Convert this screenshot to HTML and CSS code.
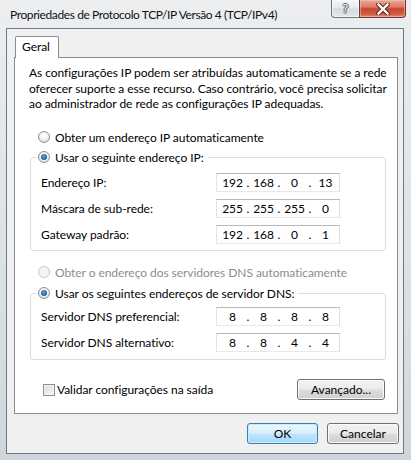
FILE: index.html
```html
<!DOCTYPE html>
<html lang="pt-BR">
<head>
<meta charset="utf-8">
<title>Propriedades de Protocolo TCP/IP Versão 4 (TCP/IPv4)</title>
<link rel="stylesheet" href="styles.css">
</head>
<body>
<div class="window">
  <div class="titlebar">
    <div class="title">Propriedades de Protocolo TCP/IP Versão 4 (TCP/IPv4)</div>
    <div class="caption">
      <div class="cap-btn help"><span class="help-glyph">?</span></div>
      <div class="cap-btn close">
        <svg width="14" height="12" viewBox="0 0 14 12">
          <path d="M2.5 1.5 L11.5 10.5 M11.5 1.5 L2.5 10.5" stroke="#5a2219" stroke-width="4.2" stroke-linecap="square" fill="none"/>
          <path d="M2.5 1.5 L11.5 10.5 M11.5 1.5 L2.5 10.5" stroke="#ffffff" stroke-width="2.4" stroke-linecap="square" fill="none"/>
        </svg>
      </div>
    </div>
  </div>
  <div class="client">
    <div class="tabs"><div class="tab">Geral</div></div>
    <div class="panel">
      <p class="intro">As configurações IP podem ser atribuídas automaticamente se a rede<br>oferecer suporte a esse recurso. Caso contrário, você precisa solicitar<br>ao administrador de rede as configurações IP adequadas.</p>

      <div class="opt opt-first"><span class="radio"></span><span>Obter um endereço IP automaticamente</span></div>

      <fieldset class="group group-ip">
        <legend><span class="radio on"></span><span>Usar o seguinte endereço IP:</span></legend>
        <div class="rows">
          <div class="row"><span>Endereço IP:</span>
            <div class="ip"><span class="seg">192</span><span class="dot">.</span><span class="seg">168</span><span class="dot">.</span><span class="seg">0</span><span class="dot">.</span><span class="seg">13</span></div>
          </div>
          <div class="row"><span>Máscara de sub-rede:</span>
            <div class="ip"><span class="seg">255</span><span class="dot">.</span><span class="seg">255</span><span class="dot">.</span><span class="seg">255</span><span class="dot">.</span><span class="seg">0</span></div>
          </div>
          <div class="row"><span>Gateway padrão:</span>
            <div class="ip"><span class="seg">192</span><span class="dot">.</span><span class="seg">168</span><span class="dot">.</span><span class="seg">0</span><span class="dot">.</span><span class="seg">1</span></div>
          </div>
        </div>
      </fieldset>

      <div class="opt opt-dns disabled"><span class="radio"></span><span>Obter o endereço dos servidores DNS automaticamente</span></div>

      <fieldset class="group group-dns">
        <legend><span class="radio on"></span><span>Usar os seguintes endereços de servidor DNS:</span></legend>
        <div class="rows">
          <div class="row"><span>Servidor DNS preferencial:</span>
            <div class="ip"><span class="seg">8</span><span class="dot">.</span><span class="seg">8</span><span class="dot">.</span><span class="seg">8</span><span class="dot">.</span><span class="seg">8</span></div>
          </div>
          <div class="row"><span>Servidor DNS alternativo:</span>
            <div class="ip"><span class="seg">8</span><span class="dot">.</span><span class="seg">8</span><span class="dot">.</span><span class="seg">4</span><span class="dot">.</span><span class="seg">4</span></div>
          </div>
        </div>
      </fieldset>

      <div class="bottom-row">
        <div class="check"><span class="box"></span><span>Validar configurações na saída</span></div>
        <button class="btn adv">Avançado...</button>
      </div>
    </div>
    <div class="actions">
      <button class="btn ok">OK</button>
      <button class="btn cancel">Cancelar</button>
    </div>
  </div>
</div>
</body>
</html>
```
FILE: styles.css
```css
* { box-sizing: border-box; }
html, body { margin: 0; padding: 0; }
body {
  width: 411px;
  height: 460px;
  overflow: hidden;
  font-family: Lato, "Noto Sans", sans-serif;
  font-size: 12px;
  letter-spacing: -0.05px;
  color: #000;
}
.window {
  width: 411px;
  height: 460px;
  display: flex;
  flex-direction: column;
  background: linear-gradient(180deg, #eceef0 0%, #e2e6ea 35%, #d9dee3 70%, #cfd5da 100%);
}
.titlebar {
  height: 28px;
  flex: none;
  display: flex;
  align-items: flex-start;
}
.title {
  padding: 6px 0 0 10px;
  font-size: 12px;
  letter-spacing: -0.4px;
  line-height: 18px;
  color: #111;
  white-space: nowrap;
}
.caption {
  margin-left: auto;
  margin-right: 5px;
  display: flex;
}
.cap-btn {
  height: 18px;
  display: flex;
  align-items: center;
  justify-content: center;
}
.help {
  width: 28px;
  border: 1px solid #6c747e;
  border-top: none;
  border-right: none;
  border-radius: 0 0 0 4px;
  background: linear-gradient(180deg, #f5f7f9 0%, #e6eaee 48%, #d3d9df 52%, #e3e8ec 100%);
  box-shadow: inset 0 0 0 1px rgba(255,255,255,0.6);
}
.help-glyph {
  font-family: "DejaVu Sans", sans-serif;
  font-size: 12px;
  line-height: 14px;
  color: #eef1f4;
  text-shadow: 1px 0 0 #5d646d, -1px 0 0 #5d646d, 0 1px 0 #5d646d, 0 -1px 0 #5d646d;
}
.close {
  width: 47px;
  border: 1px solid #6b3a32;
  border-top: none;
  border-radius: 0 0 4px 0;
  background: linear-gradient(180deg, #e9a896 0%, #dc7c65 40%, #c8472f 52%, #cf5a40 80%, #e08a70 100%);
  box-shadow: inset 0 0 0 1px rgba(255,210,200,0.45);
}
.close svg { display: block; }

.client {
  margin: 0 7px 0 6px;
  height: 426px;
  flex: none;
  border: 1px solid #6f7a86;
  background: #f0f0f0;
  display: flex;
  flex-direction: column;
}
.tabs {
  display: flex;
  padding: 7px 0 0 8px;
}
.tab {
  width: 44px;
  height: 22px;
  margin-bottom: -1px;
  border: 1px solid #898c95;
  border-bottom: none;
  border-radius: 2px 2px 0 0;
  background: #fff;
  padding: 2px 0 0 6px;
  line-height: 15px;
  position: relative;
  z-index: 1;
}
.panel {
  margin-left: 7px;
  width: 384px;
  height: 357px;
  border: 1px solid #898c95;
  background: #fff;
  display: flex;
  flex-direction: column;
}
.intro {
  margin: 7px 0 0 14px;
  line-height: 15.5px;
  white-space: nowrap;
}
.opt {
  display: flex;
  align-items: center;
  gap: 5px;
  height: 16px;
  margin-left: 23px;
}
.opt-first { margin-top: 17.5px; }
.opt-dns { margin-top: 13px; }
.disabled { color: #8d8d8d; }

.radio {
  width: 12px;
  height: 12px;
  flex: none;
  border-radius: 50%;
  border: 1px solid #8e8f8f;
  background: radial-gradient(circle at 50% 35%, #ffffff 0%, #f2f2f2 45%, #d6d6d6 100%);
  display: flex;
  align-items: center;
  justify-content: center;
}
.radio.on::after {
  content: "";
  width: 6px;
  height: 6px;
  border-radius: 50%;
  background: radial-gradient(circle at 45% 40%, #5fa4dd 0%, #2a6aa8 55%, #0f3f6e 100%);
}
.disabled .radio {
  border-color: #c4c4c4;
  background: #f4f4f4;
}

.group {
  margin: 4px 11px 0 15px;
  border: 1px solid #d5dfe5;
  border-radius: 3px;
  padding: 0 10px 6px 10px;
  min-width: 0;
}
.group-ip { padding-top: 8px; }
.group-dns { margin-top: 5px; padding-top: 6px; padding-bottom: 7px; }
.group legend {
  display: flex;
  align-items: center;
  gap: 5px;
  height: 16px;
  padding: 0 4px 0 1px;
  margin-left: -4px;
}
.rows {
  display: flex;
  flex-direction: column;
  gap: 7px;
}
.row {
  display: grid;
  grid-template-columns: 175px 124px;
  align-items: center;
  height: 19px;
}
.ip {
  height: 19px;
  display: flex;
  align-items: center;
  padding-left: 4px;
  border: 1px solid;
  border-color: #b6b8bd #dbdfe6 #e3e9ef #e2e3ea;
  background: #fff;
}
.seg {
  width: 23px;
  text-align: center;
}
.dot {
  width: 8px;
  text-align: center;
}

.bottom-row {
  display: flex;
  align-items: center;
  height: 21px;
  margin-top: 19px;
  padding-left: 28px;
  padding-right: 12px;
}
.check {
  display: flex;
  align-items: center;
  gap: 2px;
}
.box {
  width: 12px;
  height: 12px;
  border: 1px solid #8e8f8f;
  background: linear-gradient(135deg, #dcdcdc 0%, #f6f6f6 100%);
  box-shadow: inset 0 0 0 1px #f4f4f4;
}
.btn {
  font-family: Lato, "Noto Sans", sans-serif;
  font-size: 12px;
  color: #000;
  height: 21px;
  padding: 0;
  border: 1px solid #707070;
  border-radius: 3px;
  background: linear-gradient(180deg, #f2f2f2 0%, #ebebeb 48%, #dddddd 52%, #cfcfcf 100%);
  box-shadow: inset 0 0 0 1px #fbfbfb;
}
.adv {
  margin-left: auto;
  width: 88px;
}
.actions {
  display: flex;
  justify-content: flex-end;
  gap: 9px;
  padding: 9px 4px 0 0;
}
.ok {
  width: 71px;
  border-color: #3c7fb1;
  background: linear-gradient(180deg, #eaf6fd 0%, #d9f0fc 48%, #bee6fd 52%, #a7d9f5 100%);
  box-shadow: inset 0 0 0 1px #c8ecfc;
}
.cancel { width: 72px; }
```
